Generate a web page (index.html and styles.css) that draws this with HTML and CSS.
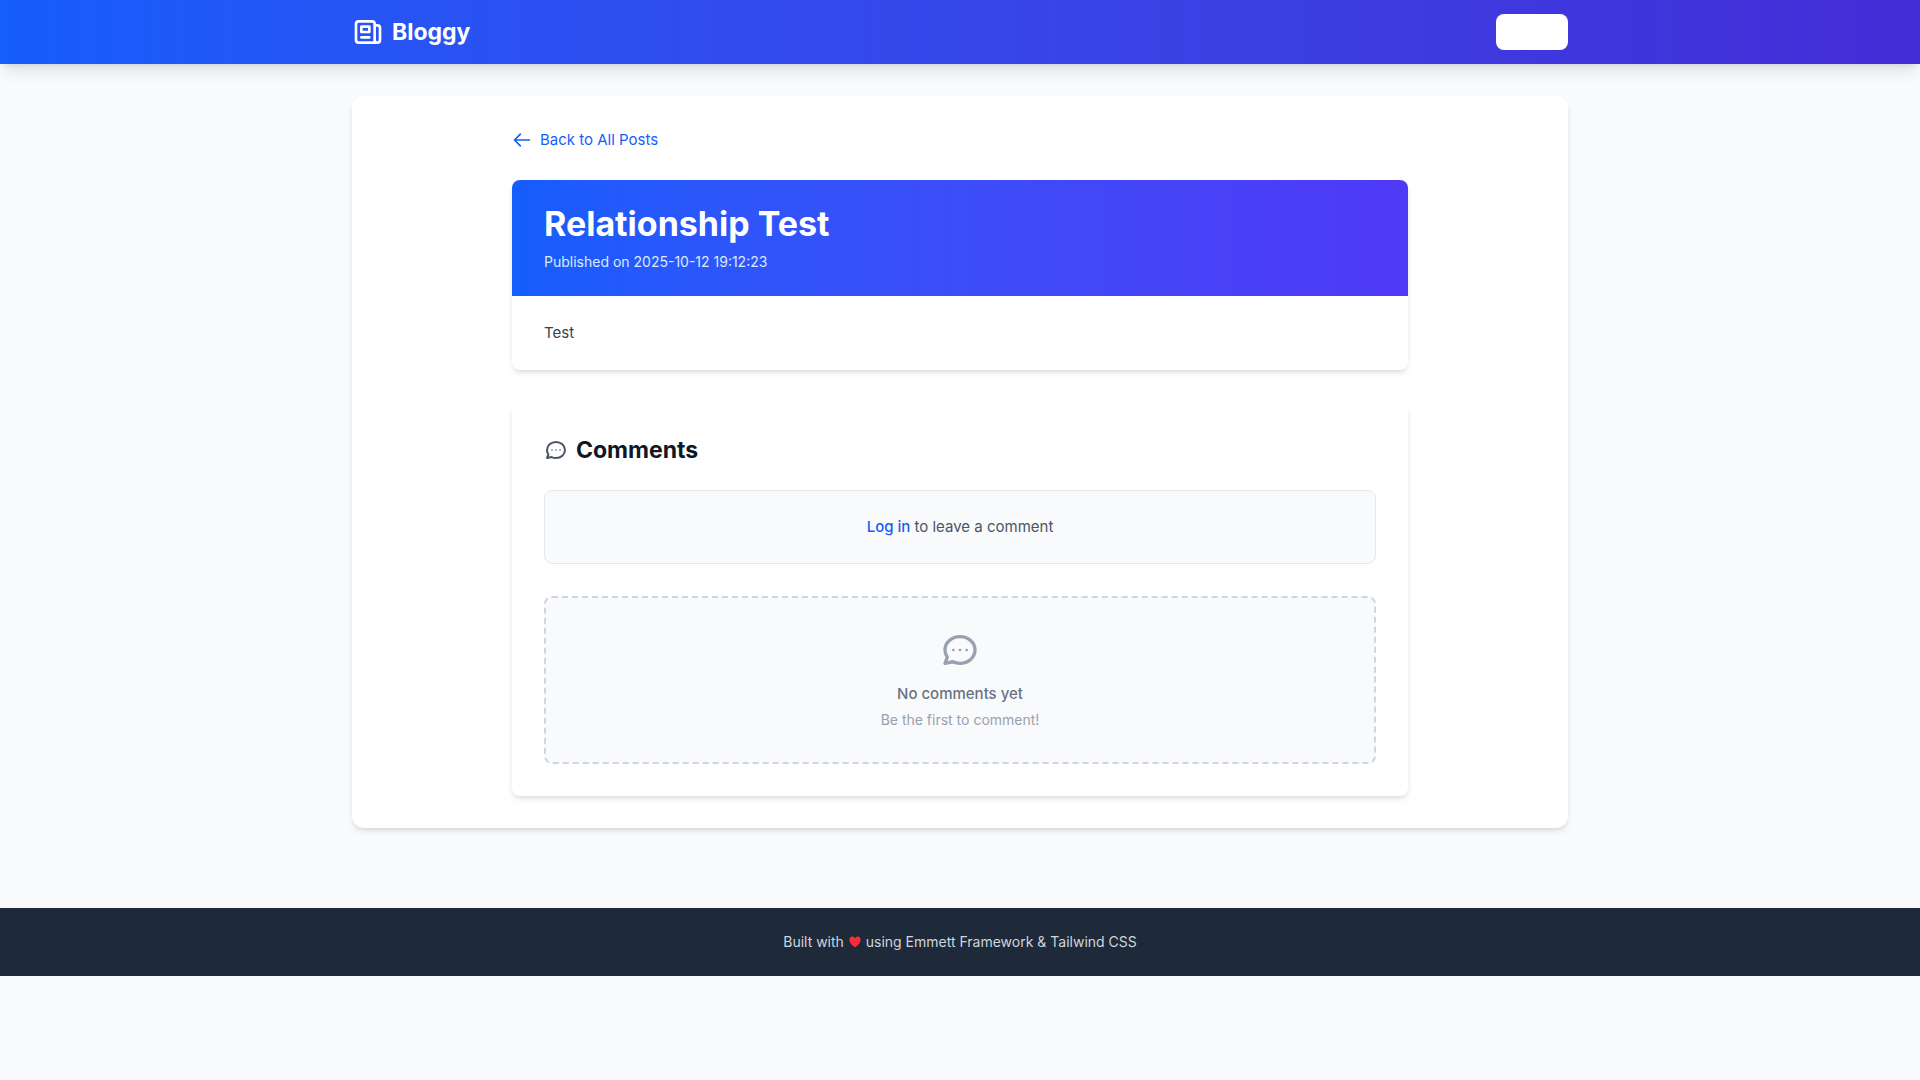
FILE: index.html
```html
<!DOCTYPE html>
<html lang="en">
<head>
<meta charset="utf-8">
<meta name="viewport" content="width=device-width, initial-scale=1">
<title>Relationship Test - Bloggy</title>
<link rel="stylesheet" href="styles.css">
</head>
<body>
<header class="site-header">
  <div class="container header-row">
    <a class="brand" href="#">
      <svg class="icon icon-logo" viewBox="0 0 24 24" aria-hidden="true"><path d="M19 20H5a2 2 0 01-2-2V6a2 2 0 012-2h10a2 2 0 012 2v1m2 13a2 2 0 01-2-2V7m2 13a2 2 0 002-2V9a2 2 0 00-2-2h-2m-4-3H9M7 16h6M7 8h6v4H7V8z"/></svg>
      <span>Bloggy</span>
    </a>
    <button class="header-button" type="button" aria-label="Log in"></button>
  </div>
</header>

<main class="container main">
  <div class="panel">
    <div class="column">
      <a class="back-link" href="#">
        <svg class="icon icon-arrow" viewBox="0 0 24 24" aria-hidden="true"><path d="M10 19l-7-7m0 0l7-7m-7 7h18"/></svg>
        <span>Back to All Posts</span>
      </a>

      <article class="card post">
        <header class="post-header">
          <h1 class="post-title">Relationship Test</h1>
          <p class="post-date">Published on 2025-10-12 19:12:23</p>
        </header>
        <p class="post-body">Test</p>
      </article>

      <section class="card comments">
        <h2 class="comments-title">
          <svg class="icon icon-chat" viewBox="0 0 24 24" aria-hidden="true"><path class="dots" d="M8 12h.01M12 12h.01M16 12h.01"/><path d="M21 12c0 4.418-4.03 8-9 8a9.863 9.863 0 01-4.255-.949L3 20l1.395-3.72C3.512 15.042 3 13.574 3 12c0-4.418 4.03-8 9-8s9 3.582 9 8z"/></svg>
          <span>Comments</span>
        </h2>
        <p class="login-note"><a class="login-link" href="#">Log in</a> to leave a comment</p>
        <div class="empty">
          <svg class="icon icon-empty" viewBox="0 0 24 24" aria-hidden="true"><path class="dots" d="M8 12h.01M12 12h.01M16 12h.01"/><path d="M21 12c0 4.418-4.03 8-9 8a9.863 9.863 0 01-4.255-.949L3 20l1.395-3.72C3.512 15.042 3 13.574 3 12c0-4.418 4.03-8 9-8s9 3.582 9 8z"/></svg>
          <p class="empty-title">No comments yet</p>
          <p class="empty-text">Be the first to comment!</p>
        </div>
      </section>
    </div>
  </div>
</main>

<footer class="site-footer">
  <p class="footer-text">Built with <svg class="heart" viewBox="0 0 14 14" role="img" aria-label="love"><path d="M7 3.4C7.6 2.1 8.700 1.500 9.800 1.500C11.500 1.500 12.600 2.800 12.600 4.700C12.600 7.800 10 10.200 7 12.500C4 10.200 1.400 7.800 1.400 4.700C1.400 2.800 2.500 1.500 4.200 1.500C5.300 1.500 6.400 2.100 7 3.400z"/></svg> using Emmett Framework &amp; Tailwind CSS</p>
</footer>
</body>
</html>
```
FILE: styles.css
```css
* {
  box-sizing: border-box;
  margin: 0;
  padding: 0;
}

body {
  background: #f9fafb;
  color: #101828;
  font-family: Inter, "Liberation Sans", sans-serif;
  font-size: 15px;
  line-height: 24px;
}

a {
  color: #155dfc;
  text-decoration: none;
}

.icon {
  flex: none;
  fill: none;
  stroke: currentColor;
  stroke-width: 2;
  stroke-linecap: round;
  stroke-linejoin: round;
}

.dots {
  stroke-width: 1.6;
}

.container {
  width: 100%;
  max-width: 1280px;
  margin: 0 auto;
  padding: 0 32px;
}

.site-header {
  background: linear-gradient(to right in oklab, #155dfc, #432dd7);
  box-shadow: 0 10px 15px -3px rgb(0 0 0 / 10%), 0 4px 6px -4px rgb(0 0 0 / 10%);
}

.header-row {
  display: flex;
  align-items: center;
  justify-content: space-between;
  min-height: 64px;
}

.brand {
  display: flex;
  align-items: center;
  gap: 8px;
  color: #fff;
  font-size: 23px;
  font-weight: 700;
  line-height: 32px;
}

.icon-logo {
  width: 32px;
  height: 32px;
}

.header-button {
  width: 72px;
  height: 36px;
  border: 0;
  border-radius: 8px;
  background: #fff;
}

.main {
  padding-top: 32px;
  padding-bottom: 32px;
}

.panel {
  padding: 32px;
  border-radius: 12px;
  background: #fff;
  box-shadow: 0 4px 6px -1px rgb(0 0 0 / 10%), 0 2px 4px -2px rgb(0 0 0 / 10%);
}

.column {
  display: flex;
  flex-direction: column;
  align-items: stretch;
  max-width: 896px;
  margin: 0 auto;
}

.back-link {
  display: flex;
  align-items: center;
  align-self: flex-start;
  gap: 8px;
  margin-bottom: 28px;
}

.icon-arrow {
  width: 20px;
  height: 20px;
}

.card {
  border-radius: 8px;
  background: #fff;
  box-shadow: 0 4px 6px -1px rgb(0 0 0 / 10%), 0 2px 4px -2px rgb(0 0 0 / 10%);
}

.post {
  margin-bottom: 32px;
  overflow: hidden;
}

.post-header {
  padding: 24px 32px;
  background: linear-gradient(to right in oklab, #155dfc, #4f39f6);
}

.post-title {
  margin-bottom: 8px;
  color: #fff;
  font-size: 34px;
  font-weight: 700;
  line-height: 40px;
}

.post-date {
  color: #dbeafe;
  font-size: 14px;
  line-height: 20px;
}

.post-body {
  padding: 24px 32px;
  color: #364153;
  line-height: 26px;
}

.comments {
  padding: 32px;
}

.comments-title {
  display: flex;
  align-items: center;
  gap: 8px;
  margin-bottom: 24px;
  font-size: 23px;
  font-weight: 700;
  line-height: 32px;
}

.icon-chat {
  width: 24px;
  height: 24px;
  color: #4a5565;
}

.login-note {
  margin-bottom: 32px;
  padding: 24px;
  border: 1px solid #e5e7eb;
  border-radius: 8px;
  background: #f9fafb;
  color: #4a5565;
  text-align: center;
}

.login-link {
  font-weight: 500;
}

.empty {
  display: flex;
  flex-direction: column;
  align-items: center;
  padding: 32px;
  border: 2px dashed #d1d5dc;
  border-radius: 8px;
  background: #f9fafb;
}

.icon-empty {
  width: 40px;
  height: 40px;
  margin-bottom: 12px;
  color: #99a1af;
}

.empty-title {
  margin-bottom: 4px;
  color: #6a7282;
  font-weight: 500;
}

.empty-text {
  color: #99a1af;
  font-size: 14px;
  line-height: 20px;
}

.site-footer {
  margin-top: 48px;
  padding: 24px 32px;
  background: #1e2939;
  color: #d1d5dc;
  text-align: center;
}

.footer-text {
  font-size: 14px;
  line-height: 20px;
}

.heart {
  width: 14px;
  height: 14px;
  fill: #fb2c36;
  vertical-align: -2px;
}
```
